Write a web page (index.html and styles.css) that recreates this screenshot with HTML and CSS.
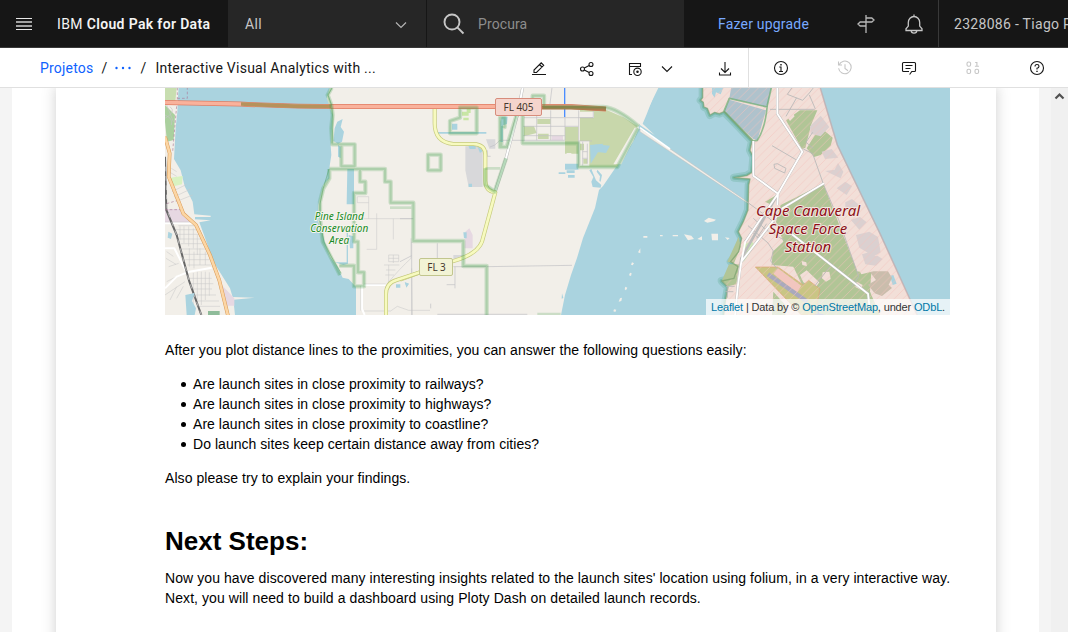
FILE: index.html
```html
<!DOCTYPE html>
<html lang="pt">
<head>
<meta charset="utf-8">
<title>IBM Cloud Pak for Data</title>
<link rel="stylesheet" href="styles.css">
</head>
<body>
<header class="header">
  <div class="brand">
    <svg class="menu" width="16" height="12" viewBox="0 0 16 12" stroke="#e8e8e8"><path d="M0 .5h16M0 11.5h16"/><path d="M0 4h16M0 8h16" stroke-width="2" stroke="#a2a2a2"/></svg>
    <span class="brand-name">IBM <b>Cloud Pak for Data</b></span>
  </div>
  <div class="scope"><span>All</span>
    <svg width="12" height="8" viewBox="0 0 12 8" fill="none" stroke="#b4b4b4" stroke-width="1.2"><path d="M1 1.500l5 5 5-5"/></svg>
  </div>
  <div class="search">
    <svg width="22" height="22" viewBox="0 0 22 22" fill="none" stroke="#c6c6c6" stroke-width="1.9"><circle cx="9" cy="9" r="7.500"/><path d="M14.300 14.300l6.200 6.200"/></svg>
    <span>Procura</span>
  </div>
  <a class="upgrade">Fazer upgrade</a>
  <div class="header-icons">
    <svg width="20" height="20" viewBox="0 0 20 20" fill="none" stroke="#b8b8b8" stroke-width="1.3"><path d="M10 1v18M10 4h5.800L18 6l-2.200 2H10zM10 8H4.200L2 10l2.200 2H10z"/></svg>
    <svg width="20" height="20" viewBox="0 0 20 20" fill="none" stroke="#c6c6c6" stroke-width="1.3"><path d="M10 .5v2M4.300 8.500a5.700 6 0 0 1 11.400 0v3.600l2.300 2.600v1.800H2v-1.800l2.300-2.600zM7.200 16.500a2.800 2.600 0 0 0 5.600 0"/></svg>
  </div>
  <div class="account">2328086 - Tiago Pereira</div>
</header>

<nav class="toolbar">
  <div class="crumbs"><a>Projetos</a><span class="slash">/</span><svg class="dots" width="16" height="4" viewBox="0 0 16 4"><circle cx="1.500" cy="2" r="1.200"/><circle cx="8" cy="2" r="1.200"/><circle cx="14.500" cy="2" r="1.200"/></svg><span class="slash slash-last">/</span><span class="current">Interactive Visual Analytics with ...</span></div>
  <div class="actions">
    <span class="action"><svg width="16" height="16" viewBox="0 0 16 16"><path d="M1 13.500h14M3 11.500V9l7.200-7.200 2.500 2.500-7.200 7.200zM8.500 3.500l2.500 2.500"/></svg></span>
    <span class="action"><svg width="16" height="16" viewBox="0 0 16 16"><circle cx="3.500" cy="8" r="2"/><circle cx="12" cy="3.500" r="2"/><circle cx="12" cy="12.500" r="2"/><path d="M5.300 7.100l4.900-2.700M5.300 8.900l4.900 2.700"/></svg></span>
    <span class="action"><svg width="16" height="16" viewBox="0 0 16 16"><path d="M5 13.500H2.500V2.500h11v3h-11"/><circle cx="10.500" cy="10.800" r="3.700"/><circle cx="10.500" cy="10.800" r=".7" fill="#161616"/></svg></span>
    <span class="action action-chevron"><svg width="12" height="8" viewBox="0 0 12 8"><path d="M1 1.500l5 5 5-5"/></svg></span>
    <span class="action action-download"><svg width="16" height="16" viewBox="0 0 16 16"><path d="M8 1v10.500M4 7.500l4 4 4-4M2.500 11.500v2.500h11v-2.500"/></svg></span>
  </div>
  <div class="panels">
    <span class="panel"><svg width="16" height="16" viewBox="0 0 16 16"><circle cx="8" cy="8" r="6.500"/><path d="M6.300 7H8v4.300M6 11.500h4"/><path d="M8 4v1.500" stroke-width="1.400"/></svg></span>
    <span class="panel muted"><svg width="16" height="16" viewBox="0 0 16 16"><path d="M1.500 1.500V5H5M2 5a6.300 6.300 0 1 1-.4 3.200M8 4.300V8.500l3 2.300"/></svg></span>
    <span class="panel"><svg width="16" height="16" viewBox="0 0 16 16"><path d="M8.600 14.500l2.200-3H13.500q1 0 1-1v-7q0-1-1-1h-11q-1 0-1 1v7q0 1 1 1H8M4.500 5.500h7M4.500 8.500h5"/></svg></span>
    <span class="panel muted"><svg width="16" height="16" viewBox="0 0 16 16"><rect x="2" y="2" width="3.600" height="4.200" rx="1.500"/><rect x="2" y="9.300" width="3.600" height="4.200" rx="1.500"/><rect x="10" y="9.300" width="3.600" height="4.200" rx="1.500"/><path d="M10.200 2.500h1.700V6.200M9.900 6.300h4"/></svg></span>
    <span class="panel"><svg width="16" height="16" viewBox="0 0 16 16"><circle cx="8" cy="8" r="6.500"/><path d="M6 6.500q0-2 2-2t2 1.800T8 8.300v1.200"/><path d="M8 10.700v1.400" stroke-width="1.400"/></svg></span>
  </div>
</nav>

<main class="workspace">
  <article class="notebook">
    <div class="map">
<svg class="map-canvas" width="785" height="227" viewBox="165 88 785 227" fill="none" stroke-linejoin="round">
  <defs>
    <pattern id="hatch" width="26" height="26" patternUnits="userSpaceOnUse"><path d="M-2 28L28-2" stroke="#f3c2bc" stroke-width="2"/></pattern>
    <path id="cape" d="M188 0V38L182 46 190 52 192 66 202 70 210 90 224 82 238 86 252 80 300 130 336 168 330 196 340 216 336 262 320 272 282 278 330 282 326 300 324 375 310 410 295 440 305 460 296 500 272 530 294 545 282 580 245 588 264 606 256 650 250 700H835L720 450 590 180 537 0z"/>
    <path id="cape-west" d="M188 0V38L182 46 190 52 192 66 202 70 210 90 224 82 238 86 252 80 300 130 336 168 330 196 340 216 336 262 320 272 282 278 330 282 326 300 324 375 310 410 295 440 305 460 296 500 272 530 294 545 282 580 245 588 264 606 256 650 250 700"/>
    <path id="reserve-west" d="M515 8L503 30 514 60 518 90 514 130 517 178H584V244H544V182M508 252H675V290H692V353H760V468H910V543H980V690M600 252v38h16v34H582V470h12v92h18v42H582V542H538M508 252V280L490 310 480 350V400L488 470 508 508 540 570"/>
    <path id="reserve-east" d="M150 108L180 98V68H230V145H150zM84 209H122V256H84zM398 66V32H432V66M368 90V175H535V246H652L714 130M256 250V300L284 320 318 220M304 188V126h10V98H300V186H320L350 90M430 66H610Q650 68 716 124"/>
  </defs>
  <path fill="#f2efe9" d="M165 88h785v227H165z"/>

  <!-- west shore and Indian River -->
  <g transform="translate(160 85) scale(.33333)">
    <path fill="#aad3df" d="M56 0L52 80 47 130 42 222 62 256 74 304 88 330 98 350 103 388 152 392V396H105V403L152 406 118 412 132 450 160 530 210 610 218 636 284 638 220 644 225 690H588V606L566 582 548 578 532 545 510 515 497 480 486 440 474 410 475 360 490 300 508 280V250L514 210 512 180 516 130 518 90 500 40 512 0z"/>
    <path fill="#c8deb0" d="M15 8H50L46 50 15 60z"/><path fill="#aad09e" d="M15 60l30 30-4 75-20 5-6-60z"/>
    <path fill="#d9f2c1" d="M30 278l38-5-2 25-24 6z"/><path fill="#e6d8e2" d="M15 372h50l35 42H15zM185 600l38 40v22h-28z"/>
    <path fill="#aad3df" d="M524 130l8-20 16-8-6 24 10 14-6 30-12 6-14-8zM534 180l8 5v34l-8-4zM562 252h20v106h-22zM566 450l14 4v36h-10zM524 532h36V430h4v106l-14 4z"/>
    <g stroke="#c8c8c8" stroke-width="1.600">
      <path d="M34 250l16 10M30 262l20 12M36 320l44-22M42 336l50-24M48 350l50-20M55 422h50M48 434h66M45 448h75M56 462h70M62 476h70M66 492h70M70 508h72M76 524h72M82 540h70M60 424v40M72 424v50M86 424v60M100 430v60M112 450v60M88 490v55M102 500v50M120 490v50M136 500v40M20 500l20 14M18 520l30 18M26 545l30-10M20 590l40-20M15 630l60-40M30 645l20-40M50 640l20-36M100 564v100M112 560v85M124 560v100M136 560v85M148 562v70M90 580h65M90 596h70M96 612h60M98 630h70M112 648h65M110 664h70"/>
      <path d="M592 335h34v66M592 335v18h34M600 401h160M650 385v108h-30M700 401v62M753 460v60Q720 550 680 598M755 550l2 140M672 540h46M686 510h30v20h-30zM686 520h30M700 510v24M686 540v54M678 555h28M676 570h26M612 678h80l20-14 34 12h64"/>
    </g>
    <g stroke="#fff" stroke-width="6"><path d="M15 415h90M15 490h28L80 562 155 548M15 610l35-35 30-12M612 600h65M606 602v70l8 18"/></g>
    <path stroke="#c4c4c4" stroke-width="1.300" d="M612 597h65M602 602v75M15 411h90"/>
    <path stroke="#666" stroke-width="6" d="M15 215l4 160L50 450 88 590 124 690"/><path stroke="#ddd" stroke-width="2" stroke-dasharray="14 14" d="M17 245l4 130L50 450 88 590 124 690"/>
    <g stroke="#ac7f9b" stroke-width="2" stroke-dasharray="8 6"><path d="M52 8V40L44 130 38 200M52 40h30V8M15 374h46M20 356l40-12"/></g>
    <path stroke="#d89955" stroke-width="11" d="M15 155l14 50-3 70 32 80L70 386 108 420 150 510 178 586 204 692"/>
    <path stroke="#fcd6a4" stroke-width="8" d="M15 155l14 50-3 70 32 80L70 386 108 420 150 510 178 586 204 692"/>
    <path fill="#aad3df" d="M76 630l28-6-8 24 12 22-4 20H80zM25 440l12 6-4 16-10-4z"/><path fill="#8fbc9a" d="M144 678h35v12h-35z"/>
    <path stroke="#c4c4c4" stroke-width="2" d="M15 100Q50 80 30 65M15 90Q40 100 34 120M20 60L40 110"/>
  </g>

  <!-- Banana River and the ocean -->
  <path fill="#aad3df" d="M658.300 88L650 105 641 121 633 142 616 167 603 186 599 190 595 208 583 238 577 258 571 275 565 295 561 315H950V88z"/>

  <!-- Merritt Island -->
  <g transform="translate(400 85) scale(.33333)">
    <path fill="#c8d7ab" d="M412 102h40v15h-40zM372 124h30l8 20-38 10zM414 146h32v16h-32zM495 126h40v80h-40zM540 75h80l50 22 42 26-60 122H540z"/>
    <path fill="#f2efe9" d="M704 128h14l-54 110h-24zM540 80h42v18h-42zM540 168h28v76h-28z"/>
    <path fill="#c8d7ab" d="M540 176h12v20h-12zM550 222h12v14h-12z"/>
    <path fill="#e6d8e2" d="M455 152h34v14h-34zM196 440l12-10 10 20v40h-24z"/>
    <g fill="#d8d8da"><path d="M196 184h52v122h-42l-10-50zM258 163h28v28h-18zM160 510h30v14h-30z"/></g>
    <g fill="#aad3df"><path d="M495 236h40v18h-40zM570 180l40-4-38 60zM586 178l44 4-12 22-32-4zM574 252l14 34 16 14-2 8-24-2-4-16 6-14-12-20zM592 254l14 16-4 20-4-2 2-14-10-14zM114 141h145v5H114zM156 116h16v18h-16zM205 182l22-4v14h-18zM232 184l16 14-8 6zM190 442h10v18h-8zM305 95h18l-2 22-12 4v50h-8v-60zM476 262h20v5h-20zM500 256h24v8h-24zM504 270h20v8h-20zM206 296h10v10h-10zM486 625l4 14-5 2zM15 592l12 4-8 12z"/></g>
    <path fill="#c8e6a5" d="M186 80h20v12h-20zM200 72h12v12h-12zM190 98h16v8h-16z"/>
    <g stroke="#c0c0c4" stroke-width="2"><path d="M372 98h208M370 124h165M370 152h125M410 76v90M452 76v90M456 8L448 72M495 95v70M536 76v170M540 98h40V76M536 168h40M548 170v72M562 176v60M548 200h14M548 220h14M270 186Q284 184 300 166H495M262 196v18h10M35 470v220M112 475v44M165 545v65M140 599h25M160 545h98M260 545L516 541M0 401h38M0 530l35-18M92 656v14M112 688h270"/></g>
    <path fill="#f2efe9" d="M500 204h14v8h-14zM512 220h20v10h-20z"/>
    <path stroke="#bbb" stroke-width="9" d="M368 8L352 90 318 220 286 318"/><path stroke="#fff" stroke-width="6" d="M368 8L352 90 318 220 286 318"/>
    <path stroke="#c5c97c" stroke-width="12" d="M0 584L60 562M158 529Q232 508 246 470L286 322Q255 318 256 285V210Q256 178 220 177H160Q104 172 104 115V72"/>
    <path stroke="#f7fabf" stroke-width="8" d="M0 584L60 562M158 529Q232 508 246 470L286 322Q255 318 256 285V210Q256 178 220 177H160Q104 172 104 115V72"/>
    <path stroke="#4b8dff" stroke-width="4" d="M494 8v88"/>
  </g>
  <g transform="translate(160 85) scale(.33333)">
    <path stroke="#c5c97c" stroke-width="12" d="M780 562L710 585Q677 594 678 630V692"/><path stroke="#f7fabf" stroke-width="8" d="M782 561L710 585Q677 594 678 630V692"/>
    <path fill="#aad3df" d="M708 598h13v10h-13zM734 592l12 4-6 10z"/>
  </g>
  <path stroke="#df7d64" stroke-width="4.800" d="M165 102.500L240 104Q290 106.500 345 106.500H570L606 109"/><path stroke="#f9b29c" stroke-width="3.400" d="M165 102.500L240 104Q290 106.500 345 106.500H570L606 109"/>
  <path stroke="#b5925c" stroke-width="3.600" d="M241 104Q290 106.500 331 106.500"/><path stroke="#b27a50" stroke-width="4" d="M540 107.500h32l34 1.500"/>

  <!-- protected area outlines -->
  <g stroke="#3c9b45" stroke-opacity=".21">
    <g transform="translate(160 85) scale(.33333)"><use href="#reserve-west" stroke-width="13"/><use href="#reserve-west" stroke-width="6"/><path stroke-width="8" d="M690 368h64"/></g>
    <g transform="translate(400 85) scale(.33333)"><use href="#reserve-east" stroke-width="13"/><use href="#reserve-east" stroke-width="6"/><path stroke-width="8" d="M256 250H300M412 687h70"/></g>
  </g>
  <g stroke="#4a9c56" stroke-opacity=".5" stroke-width=".9"><path d="M332 88l-4 7 3.500 10 1.500 14-1 24.500M329 169l-6 20-3 15v17l4 21 7 14 10 17"/></g>

  <!-- Cape Canaveral -->
  <g transform="translate(640 85) scale(.33333)">
    <path fill="#f2efe9" stroke="#bbb" stroke-width="1.500" d="M0 130l325 222 2 6L0 140z"/><path stroke="#fff" stroke-width="5" d="M0 128l90 64"/>
    <path fill="#f2efe9" d="M0 0h54L20 88 8 116 44 150 0 120zM192 408l14-10 22 6-6 5-20 4zM132 448l22 4 8 10-18 4zM172 462l14-8v12zM214 446h20v20h-18zM255 457l14 2-6 6zM98 450h16v4H98zM10 453h12v5H10zM60 450h8v4h-8zM1 490l-7 12 7 3zM-24 532l6 3-4 6-5-2zM-30 563l5 2-2 8-6-2zM-44 605l6 3-4 8-4-3zM-60 640l6-2-2 10-8 2zM-78 673l7 1-3 7-6-2z"/>
    <use href="#cape-west" stroke="#3d9b6f" stroke-opacity=".2" stroke-width="24"/>
    <use href="#cape-west" stroke="#3d9b6f" stroke-opacity=".3" stroke-width="12"/>
    <use href="#cape" fill="#f2dfd8"/>
    <path fill="#aad3df" d="M216 8h34l-8 20-14-6-4 16-8-12zM750 572l10-2 10 26-12 4z"/>
    <path fill="#afc2cc" d="M275 0H395L382 66 268 40zM268 44L378 76 352 166 340 162 252 80z"/>
    <path fill="#b1c596" d="M438 106l42-30h52l-18 42-18 70-10 4zM500 190l30-48 20-8 28 24-6 24-30 28-20 6zM422 360L550 296 592 404 656 570 694 560 690 620 720 690H520L530 630 460 545 395 540 398 500 430 470 408 410zM375 350l35-20-14 30zM262 530l34-75 6 30-20 50zM400 620l36 40v30h-40zM245 588l22-50h30l-8 60-24 6zM600 550l60 10 30 60z"/>
    <path fill="#b1c596" d="M460 545h110L690 620 700 690H530z"/>
    <path fill="#f2dfd8" d="M436 88l18-10 10 16-14 14zM480 570l20-14 38 36-14 20-34-20zM548 562l20-2 4 22-14 8-12-10zM485 528l14 4 2 12-14-4zM650 590l18 10-6 14-16-8z"/>
    <path fill="#cabdac" d="M690 562l10-3h44l12 20-10 20 10 10-30 24-22-8-20-26 24-14z"/><path fill="#b4ec9f" d="M310 480l25-12 10 14-34 48z" opacity=".6"/>
    <path fill="#dbd0d0" d="M510 124l32-32 26 34-26 28-30-8zM545 200l30-8 20 26-40 4zM556 258l28-4 10-20 16 26-8 20zM590 310l26-20 20 14-16 26zM616 352l20-10 22 18-18 20-24-4zM632 404l28-8 20 16-22 22zM648 450l40-10 26 16 8 46-20 12-44-26zM666 508l26-8 36 22-20 20-32-4z"/>
    <path fill="#c9c584" stroke="#e2a276" stroke-width="2" d="M346 546h68l76 54 16-14 34 26-16 78h-40z"/><path fill="#f2c6bf" d="M414 550l70 52-14 22-70-58z"/><path stroke="#a9a9bd" stroke-width="13" d="M384 568L502 650"/>
    <use href="#cape" fill="url(#hatch)" opacity=".8"/>
    <path stroke="#d98079" stroke-opacity=".35" stroke-width="5" d="M538 0L592 180 722 450 832 692"/>
    <g stroke="#5da96a" stroke-width="5" stroke-opacity=".65"><path d="M396 0L382 60Q376 130 352 166L340 168 252 78 268 40 382 66M252 80l16-40"/></g>
    <use href="#cape-west" stroke="#709b66" stroke-opacity=".6" stroke-width="4"/>
    <g stroke="#b8b8b8" stroke-width="2.600"><path d="M390 73h134M456 8l-14 20 46 18 20-22 14-18M470 38l-32 56M508 30l18 42M396 182l72 42M402 238l10-2 26 14-4 14-30-14zM490 192l28 14 34 96 44 102 60 170-20 30M520 190l-22-18 20-30M320 350l60 44 34 28M324 422l60 52 16 24-8 30 20 24M340 400l40 36 54 30M350 460l30-44M336 440l20 20M570 545l-46 58M518 508l-20 18M258 604h26M256 620h24M262 604v34"/></g>
    <g stroke="#bbb" stroke-width="8"><path d="M412 0V86L487 200 414 326 304 520 294 600 285 692M340 168V272L414 326 412 360M304 530L430 368 552 295M316 470L414 326M456 448L684 626 688 660"/></g>
    <g stroke="#fff" stroke-width="5.500"><path d="M412 0V86L487 200 414 326 316 470 304 530 294 600 285 692M340 168V272L414 326 412 360M304 530L430 368 552 295M456 448L684 626 688 660"/></g>
    <path fill="#9294bc" d="M534 674l5 12 14 2-12 4h-14l-4-4 10-2z"/>
  </g>

  <rect x="495.500" y="98.500" width="46" height="17" rx="1.500" fill="#f5d4cc" stroke="#d78c7b"/>
  <rect x="419.500" y="258.500" width="33" height="17" rx="1.500" fill="#f2f3d5" stroke="#c2c68e"/>
  <g class="road-label"><text x="503.500" y="111.300" textLength="30">FL 405</text><text x="427.300" y="270.800" textLength="18.500">FL 3</text></g>
  <g class="park-label" text-anchor="middle"><text x="339.200" y="220" textLength="49">Pine Island</text><text x="339.200" y="232" textLength="58">Conservation</text><text x="339.200" y="244" textLength="20">Area</text></g>
  <g class="base-label" text-anchor="middle"><text x="808" y="216.200" textLength="104">Cape Canaveral</text><text x="808" y="234" textLength="78.500">Space Force</text><text x="808" y="252" textLength="46.500">Station</text></g>
</svg>
      <div class="credit"><a>Leaflet</a> | Data by © <a>OpenStreetMap</a>, under <a>ODbL</a>.</div>
    </div>
    <p>After you plot distance lines to the proximities, you can answer the following questions easily:</p>
    <ul>
      <li>Are launch sites in close proximity to railways?</li>
      <li>Are launch sites in close proximity to highways?</li>
      <li>Are launch sites in close proximity to coastline?</li>
      <li>Do launch sites keep certain distance away from cities?</li>
    </ul>
    <p>Also please try to explain your findings.</p>
    <h1>Next Steps:</h1>
    <p class="closing">Now you have discovered many interesting insights related to the launch sites' location using folium, in a very interactive way. Next, you will need to build a dashboard using Ploty Dash on detailed launch records.</p>
  </article>
  <div class="scrollbar"><svg width="11" height="8" viewBox="0 0 11 8" fill="none" stroke="#505050" stroke-width="2.200"><path d="M1.500 6.500l4-4 4 4"/></svg></div>
</main>
</body>
</html>
```

FILE: styles.css
```css
* { box-sizing: border-box; }
body { margin: 0; height: 632px; overflow: hidden; display: flex; flex-direction: column; background: #fff; font-family: Roboto, "Open Sans", sans-serif; font-size: 14px; color: #161616; }
svg { display: block; flex: none; }

.header { flex: none; height: 48px; display: flex; background: #161616; border-bottom: 1px solid #393939; color: #c6c6c6; white-space: nowrap; overflow: hidden; }
.header > * { flex: none; display: flex; align-items: center; }
.brand { width: 228px; padding-left: 16px; gap: 25px; }
.brand-name { color: #f4f4f4; letter-spacing: .35px; }
.brand-name b { font-weight: 600; }
.scope { width: 198px; padding: 1px 19px 0 17px; justify-content: space-between; background: #262626; letter-spacing: .3px; }
.scope svg { margin-top: 2px; }
.search { width: 258px; padding-left: 16px; gap: 13px; background: #262626; border-left: 1px solid #161616; color: #8d8d8d; letter-spacing: .1px; }
.search svg { margin-top: 1px; }
.upgrade { width: 172px; padding-left: 34px; color: #78a9ff; letter-spacing: .2px; }
.header-icons { width: 82px; gap: 28px; padding-top: 1px; }
.account { width: 130px; padding: 1px 0 0 15px; border-left: 1px solid #393939; letter-spacing: .3px; }

.toolbar { flex: none; height: 40px; display: flex; border-bottom: 1px solid #e0e0e0; background: #fff; }
.toolbar svg { fill: none; stroke: #161616; stroke-width: 1.1; }
.crumbs { flex: none; width: 515px; padding-left: 40px; display: flex; align-items: center; letter-spacing: .2px; white-space: nowrap; }
.crumbs a { color: #0f62fe; }
.slash { width: 22px; text-align: center; }
.slash-last { width: 24px; }
.current { letter-spacing: .24px; }
.toolbar .dots { fill: #0f62fe; stroke: none; }
.actions { flex: none; display: flex; }
.action { width: 48px; display: flex; align-items: center; justify-content: center; padding-top: 2px; }
.action-chevron { width: 16px; }
.action-download { margin-left: 26px; }
.panels { flex: none; display: flex; margin-left: -1px; border-left: 1px solid #e0e0e0; }
.panel { flex: none; width: 64px; display: flex; align-items: center; justify-content: center; padding-top: 1px; }
.panel.muted svg { stroke: #c6c6c6; }

.workspace { flex: 1; min-height: 0; display: flex; justify-content: space-between; background: linear-gradient(90deg, #f4f4f4 12px, #fff 12px 1039px, #f4f4f4 1039px); }
.notebook { width: 940px; height: 560px; margin-left: 56px; padding: 0 40px 0 109px; background: #fff; box-shadow: 0 0 12px 1px rgba(87, 87, 87, .25); clip-path: inset(0 -20px); font: 14px/20px "Liberation Sans", Arial, sans-serif; letter-spacing: .06px; color: #000; }
.map { position: relative; width: 785px; height: 227px; }
.credit { position: absolute; right: 0; bottom: 0; width: 244px; height: 16px; padding: 0 5px; background: rgba(255, 255, 255, .7); color: #333; font-size: 11px; line-height: 17px; letter-spacing: -.15px; white-space: nowrap; }
.credit a { color: #0078a8; }
.map-canvas { letter-spacing: 0; }
.road-label { font: 10px "Noto Sans", sans-serif; fill: #46392f; }
.park-label { font: italic 10px "Noto Sans", sans-serif; fill: #188a25; stroke: #f5f4ed; stroke-width: 2px; paint-order: stroke; }
.base-label { font: italic 15px "Noto Sans", sans-serif; fill: #8d1018; stroke: #f4e7e1; stroke-width: 2px; paint-order: stroke; }
.notebook p { margin: 0; }
.map + p { margin-top: 25px; }
.notebook ul { margin: 14px 0; padding-left: 28px; list-style: none; letter-spacing: .04px; }
.notebook li { display: flex; align-items: center; gap: 7px; margin-left: -12px; }
.notebook li::before { content: ""; width: 5px; height: 5px; margin-top: 1px; border-radius: 50%; background: #000; }
.notebook h1 { margin: 39px 0 13px; font-size: 26px; line-height: 28px; font-weight: 700; letter-spacing: 0; }
.closing { letter-spacing: .078px; }
.scrollbar { width: 17px; background: #f0f0f0; padding: 4px 3px; }
```
